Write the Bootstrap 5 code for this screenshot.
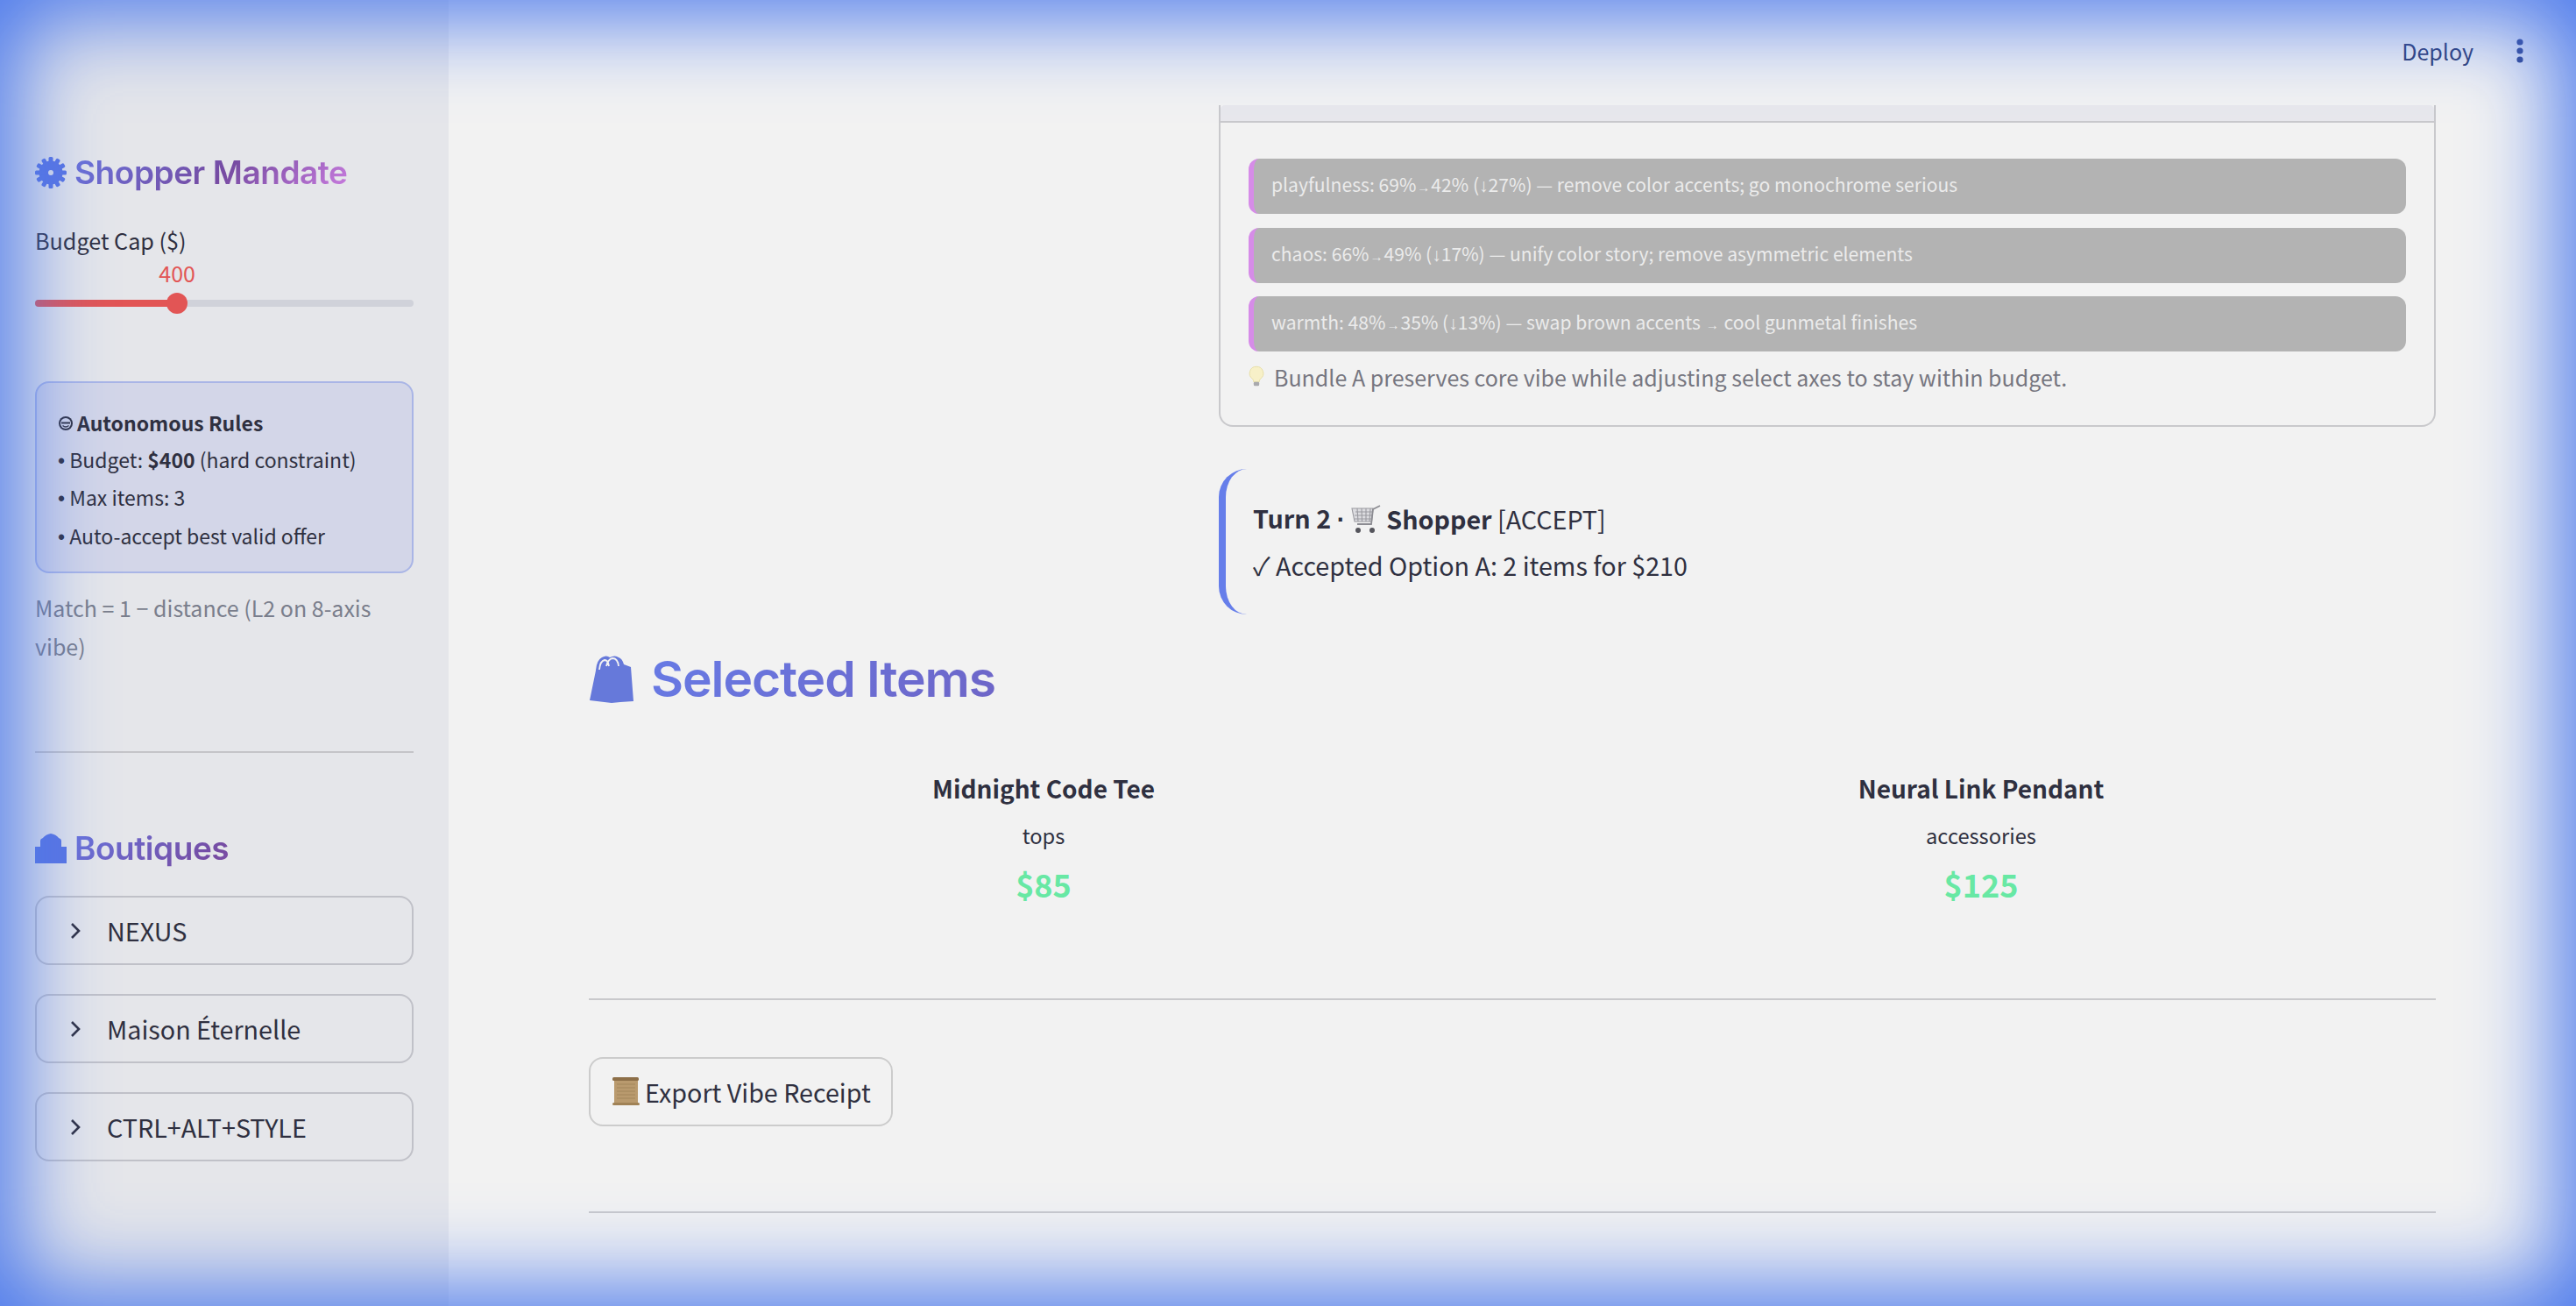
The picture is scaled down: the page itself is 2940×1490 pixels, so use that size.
<!DOCTYPE html>
<html lang="en">
<head>
<meta charset="utf-8">
<title>Shopper Mandate</title>
<link href="https://cdn.jsdelivr.net/npm/bootstrap@5.3.0/dist/css/bootstrap.min.css" rel="stylesheet">
<style>
:root{--ink:#2f3040;--head:"Inter","Liberation Sans",sans-serif}
html,body{height:1490px;overflow:hidden}
body{background:#f2f2f2;color:var(--ink);font-family:"Noto Sans CJK SC","Noto Sans",sans-serif;font-size:29px}
.shell{height:1490px}
.vignette{position:fixed;inset:0;pointer-events:none;box-shadow:inset 0 0 100px 20px rgb(74,120,236);z-index:10}
.side{width:512px;flex:none;background:#e5e6ea;padding:0 40px;height:1490px}
.grad-head{font-family:var(--head);font-weight:600;margin:0;display:flex;align-items:center;background:linear-gradient(135deg,#667eea,#764ba2,#f093fb);-webkit-background-clip:text;background-clip:text;color:transparent}
.side-head{font-size:37px;line-height:44px;letter-spacing:-.45px;gap:9px}
.head-mandate{margin-top:175px}
.head-bout{margin-top:87px}
.cap-label{font-size:25.2px;line-height:40px;margin-top:35px}
.val{font-size:25px;line-height:30px;color:#e25555;text-align:right;margin-top:2px}
.track{height:8px;background:#d0d2da;border-radius:4px;margin-top:16px}
.track-fill{height:8px;background:#e25555;border-radius:4px}
.track-knob{width:24px;height:24px;border-radius:50%;background:#e25555;margin-left:auto;transform:translate(12px,-8px)}
.rules{margin-top:85px;height:219px;background:#d3d6e8;border:2px solid #a9b5e6;border-radius:16px;padding:25px 24px;font-size:23px;line-height:41.6px}
.rules b{font-weight:700}
.blt{font-family:"Liberation Sans",sans-serif}
.note{font-size:25px;line-height:44px;color:#7a7e8c;margin-top:17px}
.side-rule{border:0;height:2px;background:#c4c4c8;opacity:1;margin:0;margin-top:98px}
.exp{height:79px;border:2px solid #c0c1c8;border-radius:16px;margin-top:33px;font-size:28.7px;padding-left:38px;gap:30px}
.exp-first{margin-top:32px}
.main-col{min-width:0}
.topbar{height:120px;padding:40px 60px 0 0;gap:49px}
.deploy{font-size:25px;line-height:36px;color:#2c3a70;padding:0;border:0;background:none}
.kebab{fill:#2c3f85}
.pane{padding:0 160px}
.ans{width:1389px;border:2px solid #c9c9cc;border-top:0;border-radius:0 0 16px 16px;background:transparent;height:367px}
.ans-top{height:20px;padding:0;border:0;border-bottom:2px solid #c9c9cc;background:#e8e8ec;border-radius:0}
.ans-body{padding:41px 32px 0 32px}
.chg{height:63px;background:#b3b3b3;border-left:6px solid #d68ce8;border-radius:12px;margin-bottom:15.5px;color:#ebebeb;font-size:21.1px;padding:0 0 2px 20px}
.arw{font-family:"Liberation Sans",sans-serif;font-size:15px;margin:0 1px}
.arw-d{font-family:"Liberation Sans",sans-serif}
.tip{font-size:25px;line-height:36px;color:#767680;margin-top:-5px;gap:11px}
.turn{width:1389px;height:166px;margin-top:48px;border-left:8px solid #667eea;border-radius:32px;padding:30px 0 0 31px;line-height:52px;font-size:28.7px}
.turn b{font-weight:600}
.sel{font-size:57px;line-height:70px;gap:15px;margin-top:39px;letter-spacing:-1.1px}
.items{--bs-gutter-x:32px;margin-top:67px;text-align:center}
.it-name{font-size:28px;font-weight:600;line-height:44px}
.it-cat{font-size:23.7px;line-height:40px;margin-top:12px}
.it-price{font-size:36px;font-weight:700;line-height:50px;color:#68e8a4;margin-top:10px}
.main-rule{border:0;height:2px;background:#c9c9cc;opacity:1;margin:0}
.rule-a{margin-top:106px}
.export{margin-top:65px;height:79px;width:347px;border:2px solid #ccc;border-radius:16px;font-size:28.7px;padding:0 0 0 25px;gap:5px;color:var(--ink);background:transparent;display:flex;align-items:center}
.rule-b{margin-top:97px}
</style>
</head>
<body>
<div class="vignette"></div>
<div class="shell d-flex">
  <aside class="side">
    <h2 class="grad-head side-head head-mandate">
      <svg width="36" height="36" viewBox="0 0 36 36"><g fill="#5a75e2"><circle cx="18" cy="18" r="13.5"/><rect x="15.5" y="0" width="5" height="36" rx="1.5"/><rect x="15.5" y="0" width="5" height="36" rx="1.5" transform="rotate(30 18 18)"/><rect x="15.5" y="0" width="5" height="36" rx="1.5" transform="rotate(60 18 18)"/><rect x="15.5" y="0" width="5" height="36" rx="1.5" transform="rotate(90 18 18)"/><rect x="15.5" y="0" width="5" height="36" rx="1.5" transform="rotate(120 18 18)"/><rect x="15.5" y="0" width="5" height="36" rx="1.5" transform="rotate(150 18 18)"/></g><circle cx="18" cy="18" r="3" fill="#e5e6ea"/></svg>
      <span>Shopper Mandate</span>
    </h2>
    <div class="cap-label">Budget Cap ($)</div>
    <div class="val" style="width:183px">400</div>
    <div class="track"><div class="track-fill d-flex" style="width:37.5%"><div class="track-knob"></div></div></div>
    <div class="rules">
      <div class="d-flex align-items-center gap-1"><svg width="18" height="18" viewBox="0 0 18 18"><circle cx="9" cy="9" r="8" fill="#2f3040"/><circle cx="9" cy="9" r="6" fill="#d3d6e8"/><path d="M4 7.5h10v2H4z" fill="#2f3040"/><path d="M5.5 11.5q3.5 3 7 0" fill="none" stroke="#2f3040" stroke-width="1.4"/></svg><b>Autonomous Rules</b></div>
      <div><span class="blt">•</span> Budget: <b>$400</b> (hard constraint)</div>
      <div><span class="blt">•</span> Max items: 3</div>
      <div><span class="blt">•</span> Auto-accept best valid offer</div>
    </div>
    <p class="note mb-0">Match = 1 − distance (L2 on 8-axis vibe)</p>
    <hr class="side-rule">
    <h2 class="grad-head side-head head-bout">
      <svg width="36" height="34" viewBox="0 0 36 34"><path fill="#5a75e2" d="M0 15h6V8q0-2 3-3 3-4 9-5 6 1 9 5 3 1 3 3v7h6v19H0z"/></svg>
      <span>Boutiques</span>
    </h2>
    <div class="exp exp-first d-flex align-items-center"><svg width="12" height="20" viewBox="0 0 12 20"><path d="M2 2l8 8-8 8" fill="none" stroke="#2f3040" stroke-width="2.6"/></svg><span>NEXUS</span></div>
    <div class="exp d-flex align-items-center"><svg width="12" height="20" viewBox="0 0 12 20"><path d="M2 2l8 8-8 8" fill="none" stroke="#2f3040" stroke-width="2.6"/></svg><span>Maison Éternelle</span></div>
    <div class="exp d-flex align-items-center"><svg width="12" height="20" viewBox="0 0 12 20"><path d="M2 2l8 8-8 8" fill="none" stroke="#2f3040" stroke-width="2.6"/></svg><span>CTRL+ALT+STYLE</span></div>
  </aside>
  <main class="main-col flex-grow-1">
    <div class="topbar d-flex justify-content-end align-items-start">
      <button class="btn deploy" type="button">Deploy</button>
      <svg width="8" height="28" viewBox="0 0 8 28" class="kebab mt-1"><circle cx="4" cy="4" r="3.6"/><circle cx="4" cy="14" r="3.6"/><circle cx="4" cy="24" r="3.6"/></svg>
    </div>
    <div class="pane">
      <div class="d-flex justify-content-end">
        <div class="card ans">
          <div class="card-header ans-top"></div>
          <div class="ans-body">
            <div class="chg d-flex align-items-center"><span>playfulness: 69%<span class="arw">→</span>42% (<span class="arw-d">↓</span>27%) — remove color accents; go monochrome serious</span></div>
            <div class="chg d-flex align-items-center"><span>chaos: 66%<span class="arw">→</span>49% (<span class="arw-d">↓</span>17%) — unify color story; remove asymmetric elements</span></div>
            <div class="chg d-flex align-items-center"><span>warmth: 48%<span class="arw">→</span>35% (<span class="arw-d">↓</span>13%) — swap brown accents <span class="arw">→</span> cool gunmetal finishes</span></div>
            <div class="tip d-flex align-items-center">
              <svg width="18" height="27" viewBox="0 0 20 27"><path d="M10 1a8.5 8.5 0 0 0-5 15.5c1 1 1.5 2.5 1.5 4h7c0-1.500.5-3 1.500-4A8.500 8.500 0 0 0 10 1z" fill="#f7f0c8" stroke="#e5dca0"/><rect x="6.500" y="20.500" width="7" height="5" rx="1.500" fill="#a9a9ad"/></svg>
              <span>Bundle A preserves core vibe while adjusting select axes to stay within budget.</span>
            </div>
          </div>
        </div>
      </div>
      <div class="d-flex justify-content-end">
        <div class="turn">
          <div class="d-flex align-items-center"><b>Turn 2 <span class="blt">·</span>&nbsp;</b><svg width="34" height="33" viewBox="0 0 34 33"><g fill="none" stroke="#9a9aa0" stroke-width="1.100"><path d="M1 4h24l-1.500 15H4z" fill="#dcdce0"/><path d="M5 8h19M4 12h20M4 16h19M7 4l1 15M12 4l.5 15M17 4l0 15M22 4l-1 15"/></g><path d="M33 1l-8 4-2 17H7" fill="none" stroke="#8c8c92" stroke-width="1.800"/><circle cx="8" cy="29" r="3" fill="#55555c"/><circle cx="24" cy="29" r="3" fill="#55555c"/></svg><b>&nbsp;Shopper</b>&nbsp;[ACCEPT]</div>
          <div>✓ Accepted Option A: 2 items for $210</div>
        </div>
      </div>
      <h2 class="grad-head sel">
        <svg width="56" height="56" viewBox="0 0 56 56"><path fill="#6679da" d="M8 18q1-12 7-15 5-3 9 0 6-3 10 0 4 1 6 8l8 3 3 39-15 1-10 1-25-3z"/><path d="M12 17q1-10 6-11 4 0 5 7M20 13q2-8 7-9 6 0 7 9" fill="none" stroke="#f2f2f2" stroke-width="1.800"/></svg>
        <span>Selected Items</span>
      </h2>
      <div class="row items">
        <div class="col-6">
          <div class="it-name">Midnight Code Tee</div>
          <div class="it-cat">tops</div>
          <div class="it-price">$85</div>
        </div>
        <div class="col-6">
          <div class="it-name">Neural Link Pendant</div>
          <div class="it-cat">accessories</div>
          <div class="it-price">$125</div>
        </div>
      </div>
      <hr class="main-rule rule-a">
      <button class="btn export" type="button">
        <svg width="32" height="33" viewBox="0 0 32 33"><rect x="2" y="2" width="27" height="29" fill="#b99a6e"/><rect x="0" y="0" width="30" height="4" rx="1.500" fill="#8d6f48"/><rect x="0" y="29" width="31" height="3" rx="1.500" fill="#a08256"/><path d="M5 8h21M5 12h21M5 16h21M5 20h21M5 24h21" stroke="#a2855a" stroke-width="1"/></svg>
        <span>Export Vibe Receipt</span>
      </button>
      <hr class="main-rule rule-b">
    </div>
  </main>
</div>
</body>
</html>
